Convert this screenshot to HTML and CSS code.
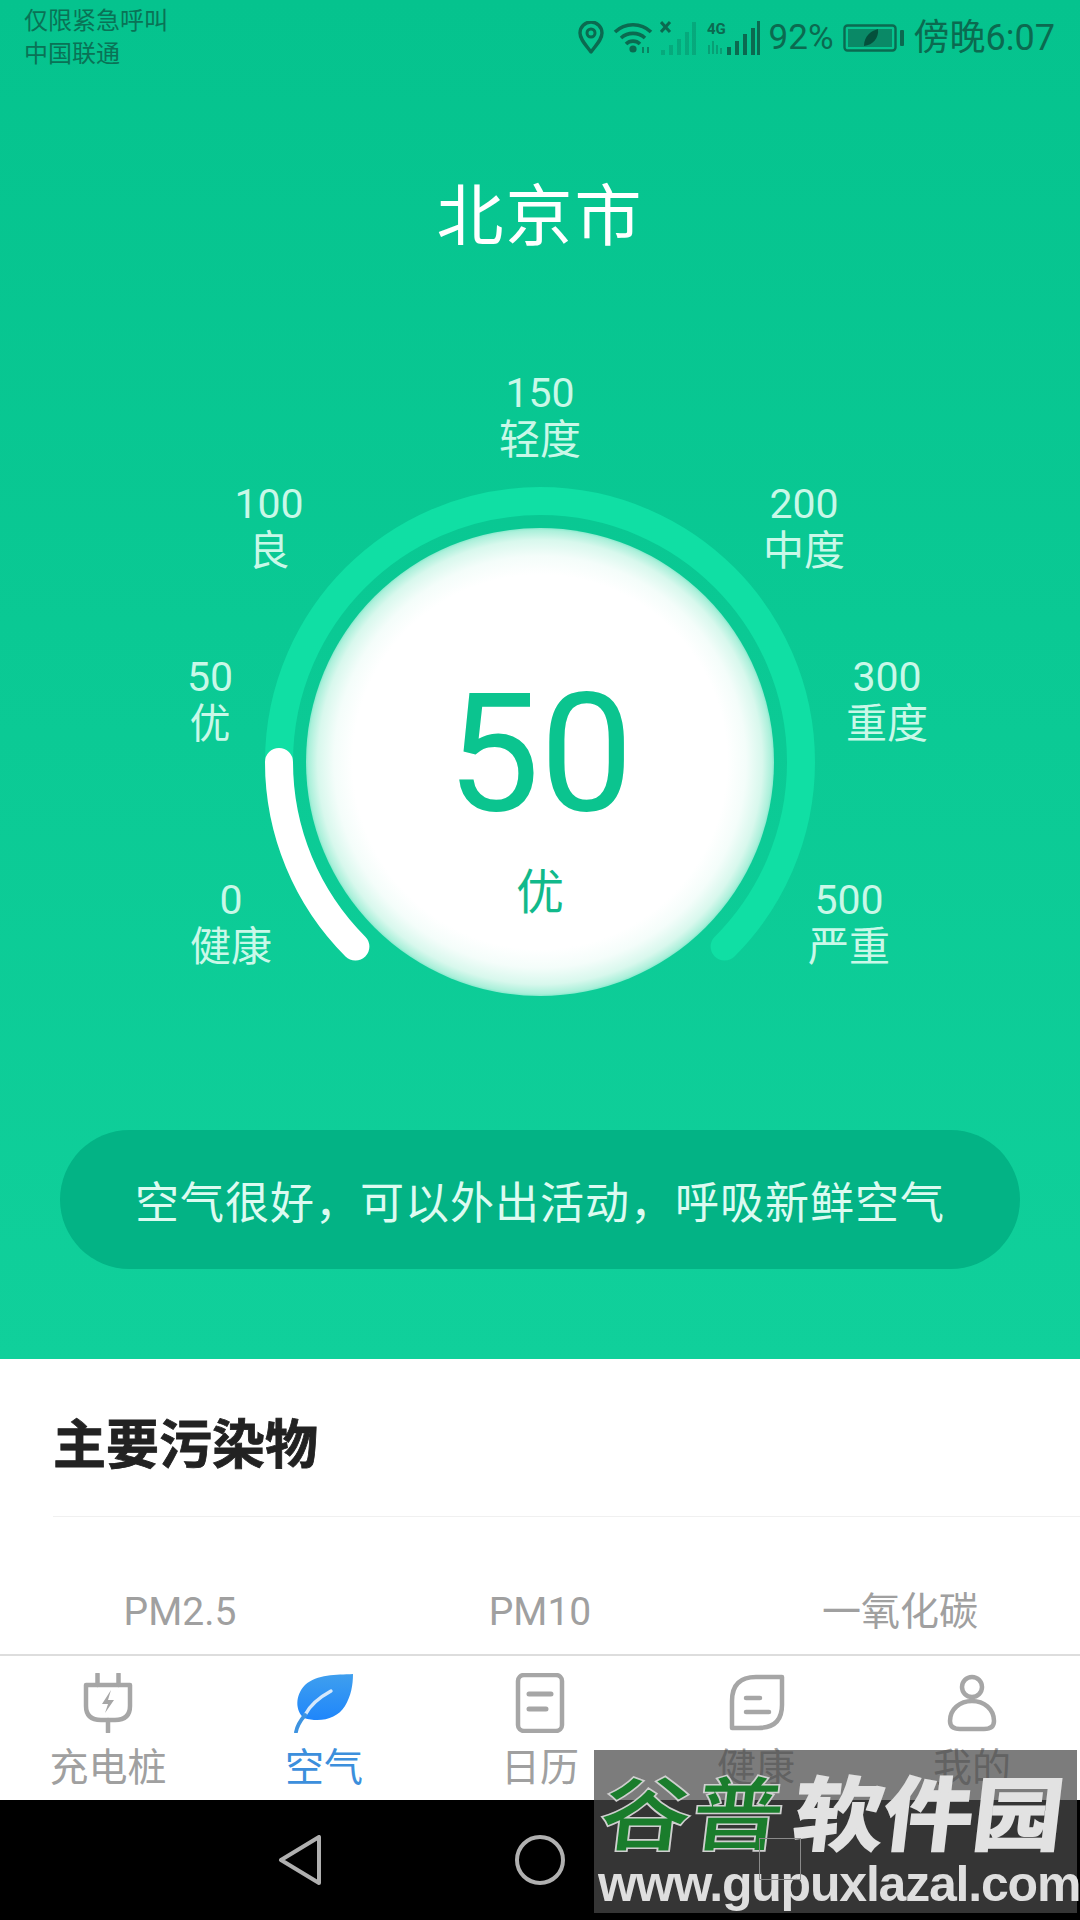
FILE: index.html
```html
<!DOCTYPE html>
<html lang="zh-CN">
<head>
<meta charset="UTF-8">
<title>空气</title>
<link rel="stylesheet" href="styles.css">
</head>
<body>
<div class="phone">
  <section class="hero">
    <div class="status">
      <div class="carrier">
        <div>仅限紧急呼叫</div>
        <div>中国联通</div>
      </div>
      <div class="status-right">
        <svg class="st-pin" width="26" height="33" viewBox="0 0 26 33"><path d="M13 31 C7 23 2 18 2 12 A11 11 0 0 1 24 12 C24 18 19 23 13 31Z" fill="none" stroke="#0b6a50" stroke-width="3.4" stroke-linejoin="round"/><circle cx="13" cy="12" r="4" fill="none" stroke="#0b6a50" stroke-width="3"/></svg>
        <svg class="st-wifi" width="40" height="32" viewBox="0 0 40 32"><g fill="none" stroke="#0b6a50" stroke-width="3.6"><path d="M2 10 A26 26 0 0 1 38 10"/><path d="M8 16 A18 18 0 0 1 32 16"/><path d="M13 22 A10 10 0 0 1 27 22"/></g><circle cx="20" cy="27" r="3.6" fill="#0b6a50"/><path d="M30 25 v6 M35 31 v-6" stroke="#0b6a50" stroke-width="2" opacity=".7"/></svg>
        <svg class="st-sim" width="36" height="34" viewBox="0 0 36 34"><path d="M1 1 L10 11 M10 1 L1 11" stroke="#0b6a50" stroke-width="3"/><g fill="#0b6a50" opacity=".28"><rect x="1" y="29" width="4" height="5"/><rect x="9" y="24" width="4" height="10"/><rect x="17" y="18" width="4" height="16"/><rect x="25" y="11" width="4" height="23"/><rect x="32" y="1" width="4" height="33"/></g></svg>
        <svg class="st-sim2" width="53" height="34" viewBox="0 0 53 34"><text x="0" y="13" class="st-4g">4G</text><path d="M2 24 v9 M6 20 v13 M10 24 v9 M14 27 v6" stroke="#0b6a50" stroke-width="2" opacity=".4"/><g fill="#0b6a50"><rect x="20" y="26" width="4" height="8"/><rect x="28" y="20" width="4" height="14"/><rect x="36" y="13" width="4" height="21"/><rect x="44" y="7" width="4" height="27"/><rect x="50" y="0" width="3" height="34"/></g></svg>
        <span class="st-pct">92%</span>
        <svg class="st-batt" width="62" height="28" viewBox="0 0 62 28"><rect x="1.500" y="1.500" width="51" height="25" rx="3" fill="none" stroke="#0b6a50" stroke-width="2.400"/><rect x="5" y="5" width="44" height="18" fill="#0b7a5c" opacity=".8"/><path d="M21 22 C21 12 28 7 35 5 C36 14 30 21 21 22Z" fill="#04503c"/><rect x="57" y="6" width="4" height="16" rx="1" fill="#0b6a50"/></svg>
        <span class="st-time">傍晚6:07</span>
      </div>
    </div>

    <h1 class="city">北京市</h1>

    <div class="gauge">
      <svg class="gauge-ring" width="580" height="580" viewBox="0 0 580 580">
        <path class="ring-track" d="M105.400 474.600 A261 261 0 1 1 474.600 474.600"/>
        <path class="ring-value" d="M105.400 474.600 A261 261 0 0 1 29 290"/>
      </svg>
      <div class="dial">
        <div class="dial-num">50</div>
        <div class="dial-txt">优</div>
      </div>
      <div class="mark mark-0"><span>0</span><span>健康</span></div>
      <div class="mark mark-50"><span>50</span><span>优</span></div>
      <div class="mark mark-100"><span>100</span><span>良</span></div>
      <div class="mark mark-150"><span>150</span><span>轻度</span></div>
      <div class="mark mark-200"><span>200</span><span>中度</span></div>
      <div class="mark mark-300"><span>300</span><span>重度</span></div>
      <div class="mark mark-500"><span>500</span><span>严重</span></div>
    </div>

    <div class="advice">空气很好，可以外出活动，呼吸新鲜空气</div>
  </section>

  <section class="sheet">
    <h2 class="sheet-title">主要污染物</h2>
    <div class="pollutants">
      <div>PM2.5</div>
      <div>PM10</div>
      <div>一氧化碳</div>
    </div>
  </section>

  <nav class="tabs">
    <a class="tab">
      <svg class="tab-icon" width="60" height="60" viewBox="0 0 60 60"><g class="ico"><path d="M19.500 1 V12 M40.500 1 V12"/><path d="M8 12 H52 V33 Q52 47 37 47 H23 Q8 47 8 33Z"/><path d="M30 47 V59"/></g><path d="M33 17 L24 31 H30 L27 40 L36 27 H30Z" fill="#a6a6a6"/></svg>
      <span>充电桩</span>
    </a>
    <a class="tab tab-on">
      <svg class="tab-icon" width="60" height="60" viewBox="0 0 60 60"><defs><linearGradient id="leaf" x1="0" y1="0" x2="0" y2="1"><stop offset="0" stop-color="#3f9fee"/><stop offset="1" stop-color="#1f86fb"/></linearGradient></defs><path d="M59 1 C42 2 23 1 11 12 C1 22 1 38 10 45 C26 50 43 46 51 33 C57 23 59 12 59 1Z" fill="url(#leaf)"/><path d="M37 18 C26 24 16 32 11 42" fill="none" stroke="#d5e8fb" stroke-width="3.400" stroke-linecap="round"/><path d="M11 42 C6 48 3 53 2 59" fill="none" stroke="#3d93e0" stroke-width="3.800" stroke-linecap="round"/></svg>
      <span>空气</span>
    </a>
    <a class="tab">
      <svg class="tab-icon" width="60" height="60" viewBox="0 0 60 60"><g class="ico"><rect x="8" y="2" width="44" height="56" rx="6"/><path d="M19 21 H41 M19 36 H36" stroke-width="5"/></g></svg>
      <span>日历</span>
    </a>
    <a class="tab">
      <svg class="tab-icon" width="60" height="60" viewBox="0 0 60 60"><g class="ico"><path d="M56 4 V32 Q56 55 32 55 H6 V28 Q6 4 30 4Z"/><path d="M20 25 H34 M20 39 H43"/></g></svg>
      <span>健康</span>
    </a>
    <a class="tab">
      <svg class="tab-icon" width="60" height="60" viewBox="0 0 60 60"><g class="ico"><circle cx="30" cy="14" r="10"/><path d="M18 56 H42 Q52 56 52 48 C52 36 42 28 30 28 C18 28 8 36 8 48 Q8 56 18 56Z"/></g></svg>
      <span>我的</span>
    </a>
  </nav>

  <footer class="syskeys">
    <svg width="44" height="50" viewBox="0 0 44 50"><path d="M3 25 L41 2 V48Z" class="key"/></svg>
    <svg width="50" height="50" viewBox="0 0 50 50"><circle cx="25" cy="25" r="23" class="key"/></svg>
  </footer>

  <!-- site stamp laid over the bottom corner -->
  <div class="stamp">
    <div class="stamp-cn"><span class="stamp-green">谷普</span><span class="stamp-white">软件园</span></div>
    <div class="stamp-url">www.gupuxlazal.com</div>
    <div class="stamp-key"></div>
  </div>
</div>
</body>
</html>
```

FILE: styles.css
```css
* {
  box-sizing: border-box;
}
html, body {
  margin: 0;
  padding: 0;
}
body {
  font-family: Roboto, "Noto Sans CJK SC", sans-serif;
}
.phone {
  position: relative;
  width: 1080px;
  height: 1920px;
  display: flex;
  flex-direction: column;
  overflow: hidden;
  background: #fff;
}

/* top green part */
.hero {
  flex: none;
  height: 1359px;
  display: flex;
  flex-direction: column;
  background: linear-gradient(#05c38e, #10d09b);
}
.status {
  height: 80px;
  padding: 5px 25px 0 24px;
  display: flex;
  justify-content: space-between;
  color: #0b6a50;
}
.carrier {
  font-size: 24px;
  line-height: 33px;
  opacity: .9;
}
.status-right {
  display: flex;
  align-items: center;
  height: 67px;
  margin-top: -1px;
}
.status-right svg {
  display: block;
  flex: none;
}
.st-wifi { margin-left: 9px; }
.st-sim { margin-left: 7px; }
.st-sim2 { margin-left: 11px; }
.st-4g {
  font-size: 15px;
  font-weight: 700;
  fill: #0b6a50;
}
.st-pct {
  margin-left: 9px;
  font-size: 35px;
  line-height: 66px;
}
.st-batt { margin-left: 9px; }
.st-time {
  margin-left: 9px;
  font-size: 36px;
  line-height: 66px;
}
.city {
  margin: 92px 0 0 0;
  font-size: 67px;
  line-height: 90px;
  font-weight: 400;
  color: #fff;
  text-align: center;
  letter-spacing: 2px;
}

/* dial */
.gauge {
  position: relative;
  height: 640px;
  margin-top: 106px;
}
.gauge-ring {
  position: absolute;
  left: 250px;
  top: 104px;
}
.ring-track, .ring-value {
  fill: none;
  stroke-width: 28;
  stroke-linecap: round;
}
.ring-track { stroke: #10dfa4; }
.ring-value { stroke: #fff; }
.dial {
  position: absolute;
  left: 306px;
  top: 160px;
  width: 468px;
  height: 468px;
  border-radius: 50%;
  background: radial-gradient(circle closest-side, #fff 80%, #f4fdfa 88%, #d8f8ed 95%, #aaf0da 99%, #8aeace 100%);
  color: #0bc48f;
  text-align: center;
}
.dial-num {
  margin-top: 128px;
  font-size: 166px;
  line-height: 196px;
}
.dial-txt {
  margin-top: 11px;
  font-size: 48px;
  line-height: 60px;
  color: #12b98b;
}
.mark {
  position: absolute;
  display: flex;
  flex-direction: column;
  align-items: center;
  width: 120px;
  margin-left: -60px;
  font-size: 41px;
  line-height: 47px;
  color: #c9f8e8;
}
.mark-0 { left: 231px; top: 509px; }
.mark-50 { left: 210px; top: 286px; }
.mark-100 { left: 269px; top: 113px; }
.mark-150 { left: 540px; top: 2px; }
.mark-200 { left: 804px; top: 113px; }
.mark-300 { left: 887px; top: 286px; }
.mark-500 { left: 849px; top: 509px; }
.advice {
  height: 139px;
  margin: 122px 60px 0 60px;
  border-radius: 70px;
  background: #03b385;
  color: #dcfbf1;
  font-size: 44px;
  letter-spacing: 1px;
  display: flex;
  align-items: center;
  justify-content: center;
}

/* white sheet */
.sheet {
  flex: 1;
  min-height: 0;
  overflow: hidden;
  padding: 52px 0 0 53px;
}
.sheet-title {
  margin: 0;
  padding-bottom: 35px;
  border-bottom: 1px solid #f0f0f0;
  font-size: 53px;
  line-height: 70px;
  font-weight: 700;
  color: #222;
  -webkit-text-stroke: .8px #222;
}
.pollutants {
  display: grid;
  grid-template-columns: repeat(3, 360px);
  margin: 73px 0 0 -53px;
  font-size: 39px;
  line-height: 44px;
  color: #a0a0a0;
  text-align: center;
}

/* tab bar */
.tabs {
  flex: none;
  height: 146px;
  display: grid;
  grid-template-columns: repeat(5, 216px);
  padding-top: 17px;
  border-top: 2px solid #ddd;
  background: #fff;
}
.tab {
  display: flex;
  flex-direction: column;
  align-items: center;
  gap: 13px;
  font-size: 39px;
  line-height: 44px;
  color: #a0a0a0;
}
.tab-on { color: #3c8fdc; }
.tab-icon { display: block; }
.ico {
  fill: none;
  stroke: #a6a6a6;
  stroke-width: 4.5;
  stroke-linecap: round;
  stroke-linejoin: round;
}
.syskeys {
  flex: none;
  height: 120px;
  padding-left: 278px;
  display: flex;
  align-items: center;
  gap: 193px;
  background: #000;
}
.key {
  fill: none;
  stroke: #b0b0b0;
  stroke-width: 4;
  stroke-linejoin: round;
}

/* stamp */
.stamp {
  position: absolute;
  left: 594px;
  top: 1750px;
  width: 483px;
  height: 163px;
  background: rgba(73, 73, 73, .72);
}
.stamp-cn {
  display: flex;
  height: 111px;
  padding: 21px 0 0 6px;
  font-size: 76px;
  line-height: 90px;
  font-weight: 700;
  white-space: nowrap;
}
.stamp-cn span {
  display: block;
  transform-origin: left center;
}
.stamp-green {
  width: 194px;
  color: #1a7d2c;
  -webkit-text-stroke: 1.5px #cfcfcf;
  transform: scale(1.21, 1.06) skewX(-6deg);
}
.stamp-white {
  color: #e2e2e2;
  -webkit-text-stroke: 2px #e2e2e2;
  transform: scale(1.18, 1.06) skewX(-6deg);
}
.stamp-url {
  padding-left: 4px;
  font-family: "Liberation Sans", sans-serif;
  font-size: 50px;
  line-height: 46px;
  font-weight: 700;
  letter-spacing: -1.2px;
  color: #dedede;
  white-space: nowrap;
}
.stamp-key {
  position: absolute;
  left: 165px;
  top: 88px;
  width: 42px;
  height: 42px;
  border: 1px solid #8a8a8a;
}
```
